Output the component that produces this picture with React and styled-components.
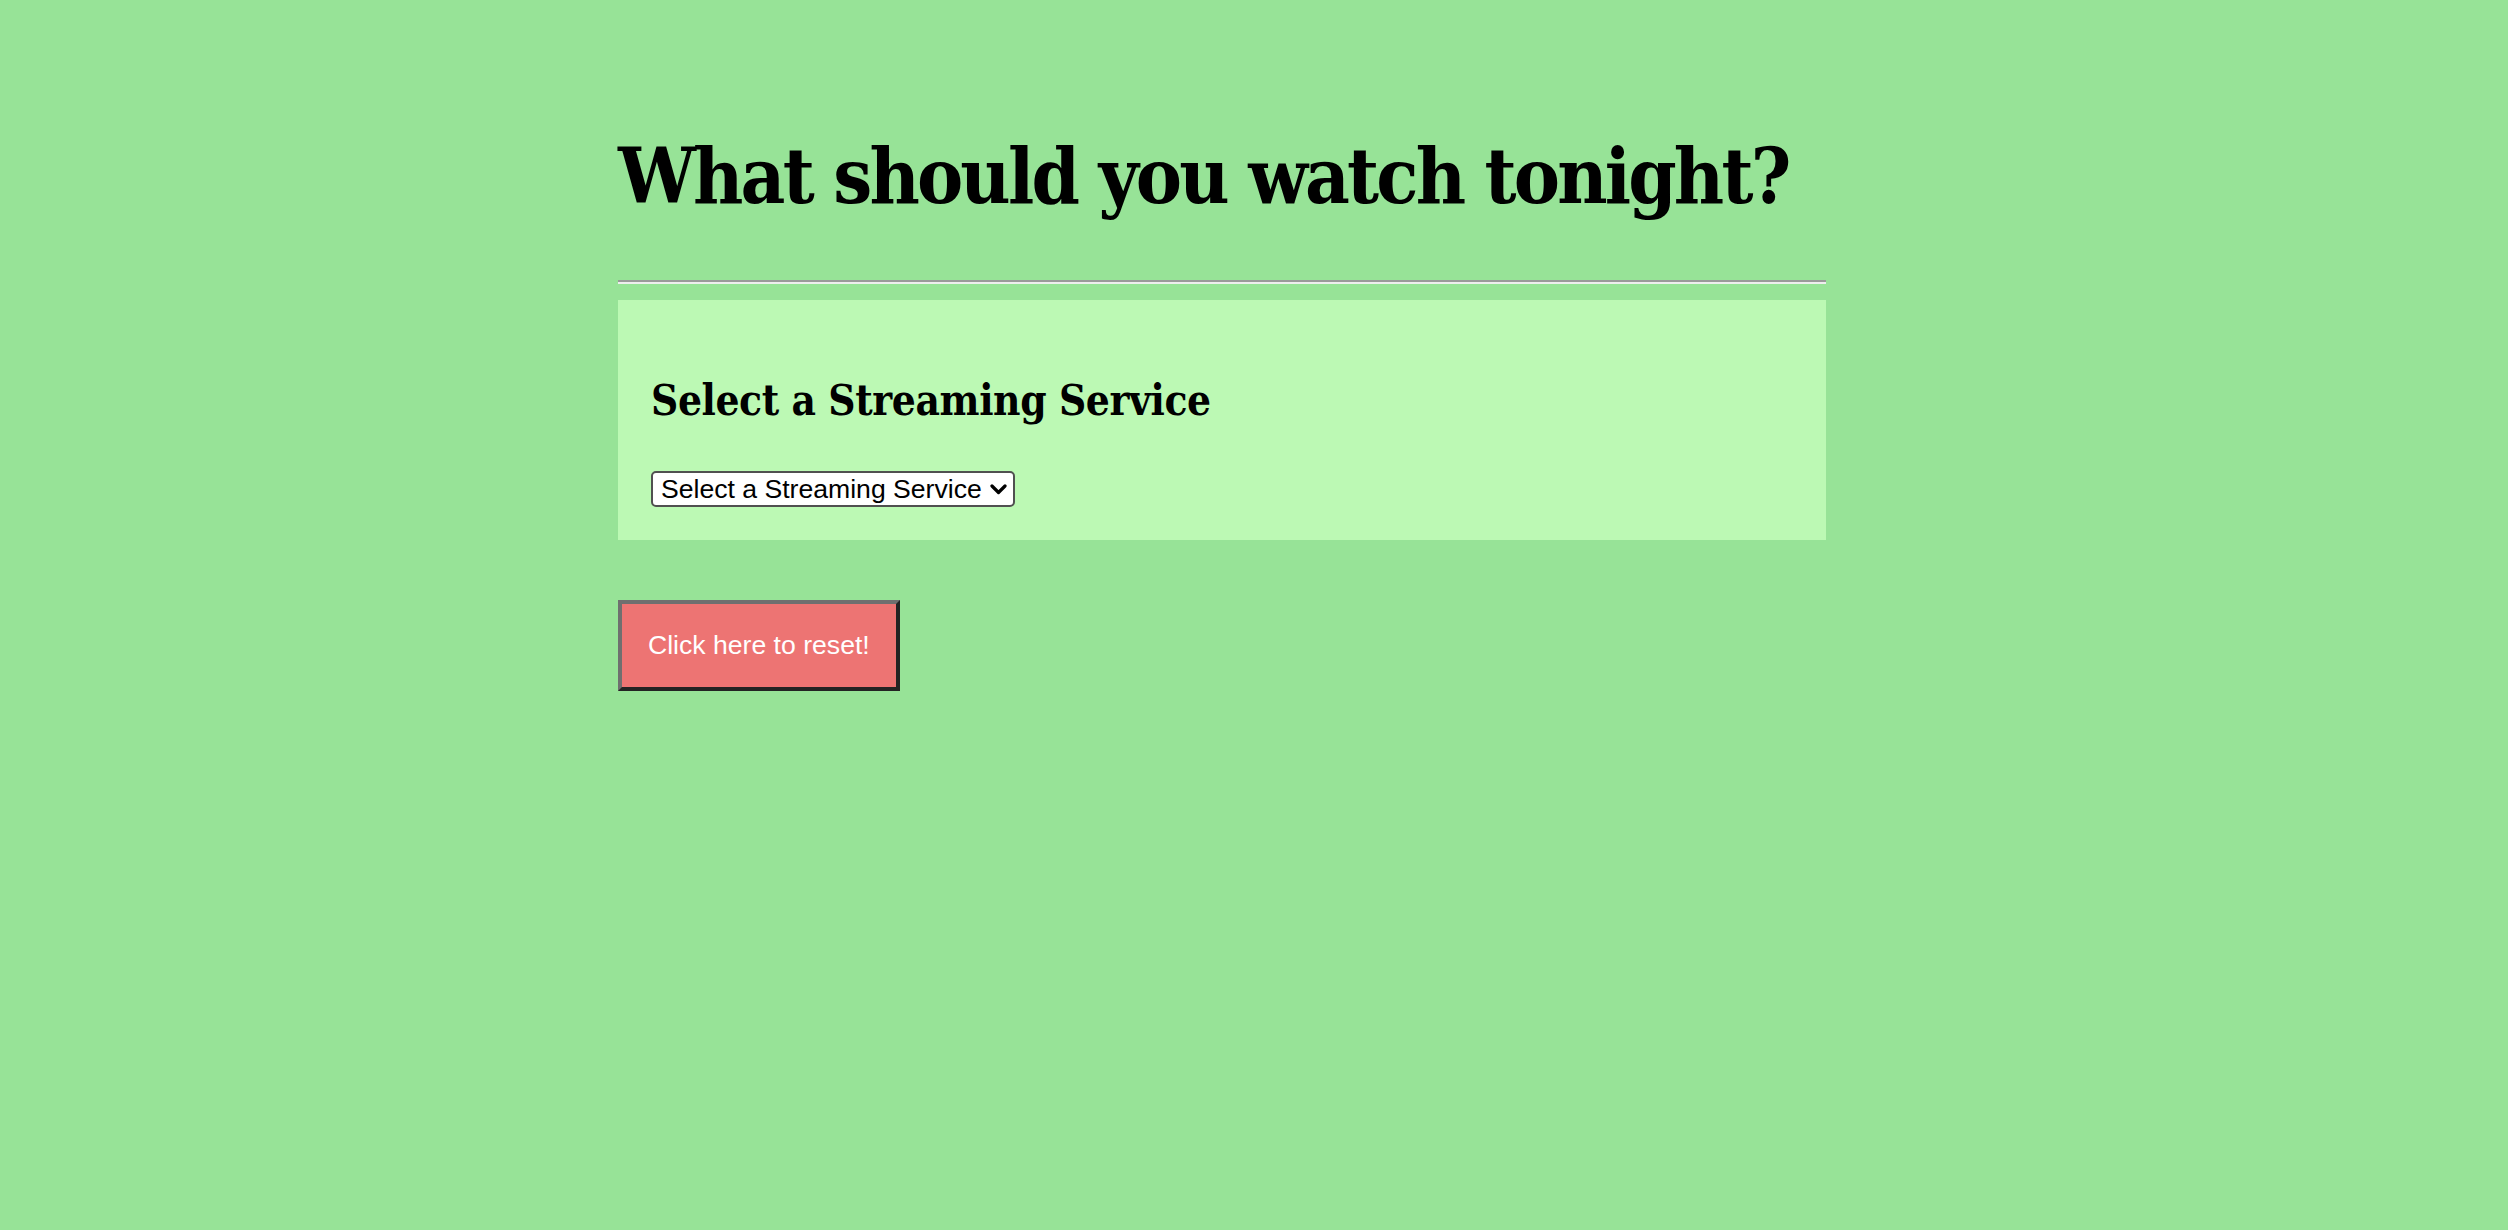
import React, { useState } from 'react';
import styled, { createGlobalStyle } from 'styled-components';

const GlobalStyle = createGlobalStyle`
  html, body {
    margin: 0;
    padding: 0;
    background: #97e397;
  }
  body {
    min-height: 1230px;
    font-family: "Liberation Sans", Arial, sans-serif;
  }
`;

const Page = styled.main`
  width: 1208px;
  margin-left: 618px;
  display: flex;
  flex-direction: column;
  align-items: flex-start;
`;

const Title = styled.h1`
  margin: 138px 0 0 0;
  font-family: "DejaVu Serif Condensed", "DejaVu Serif", serif;
  font-stretch: condensed;
  font-weight: 700;
  font-size: 77px;
  line-height: 77px;
  letter-spacing: -2.8px;
  color: #000;
  white-space: nowrap;
`;

const Rule = styled.hr`
  align-self: stretch;
  margin: 65px 0 0 0;
  height: 0;
  border: none;
  border-top: 2px solid #9a9a9a;
  border-bottom: 2px solid #eeeeee;
`;

const Panel = styled.section`
  align-self: stretch;
  margin-top: 16px;
  padding: 80px 33px 33px;
  background: #bcf9b4;
  display: flex;
  flex-direction: column;
  align-items: flex-start;
`;

const PanelTitle = styled.h2`
  margin: 0;
  font-family: "DejaVu Serif Condensed", "DejaVu Serif", serif;
  font-stretch: condensed;
  font-weight: 700;
  font-size: 42px;
  line-height: 42px;
  letter-spacing: -0.4px;
  color: #000;
  white-space: nowrap;
`;

const SelectWrap = styled.div`
  position: relative;
  margin-top: 49px;
`;

const Select = styled.select`
  appearance: none;
  -webkit-appearance: none;
  width: 364px;
  height: 36px;
  padding: 0 30px 0 8px;
  border: 2px solid #505050;
  border-radius: 5px;
  background: #fff;
  color: #000;
  font-family: "Liberation Sans", Arial, sans-serif;
  font-size: 26.6px;
  line-height: 32px;
`;

const Chevron = styled.svg`
  position: absolute;
  right: 8px;
  top: 13px;
  width: 17px;
  height: 11px;
  pointer-events: none;
`;

const ResetButton = styled.button`
  margin-top: 60px;
  padding: 26px 26px;
  background: #ed7473;
  color: #fff;
  font-family: "Liberation Sans", Arial, sans-serif;
  font-size: 26.6px;
  line-height: 31px;
  border: 4px solid;
  border-color: #6f6f6f #232323 #232323 #6f6f6f;
  cursor: pointer;
`;

const services = ['Netflix', 'Hulu', 'Disney+', 'HBO Max', 'Prime Video'];

export default function App() {
  const [service, setService] = useState('');

  return (
    <>
      <GlobalStyle />
      <Page>
        <Title>What should you watch tonight?</Title>
        <Rule />
        <Panel>
          <PanelTitle>Select a Streaming Service</PanelTitle>
          <SelectWrap>
            <Select value={service} onChange={(e) => setService(e.target.value)}>
              <option value="">Select a Streaming Service</option>
              {services.map((s) => (
                <option key={s} value={s}>{s}</option>
              ))}
            </Select>
            <Chevron viewBox="0 0 17 11">
              <path d="M2 2 L8.5 8.5 L15 2" fill="none" stroke="#000" strokeWidth="3.2" strokeLinecap="round" strokeLinejoin="round" />
            </Chevron>
          </SelectWrap>
        </Panel>
        <ResetButton onClick={() => setService('')}>Click here to reset!</ResetButton>
      </Page>
    </>
  );
}
